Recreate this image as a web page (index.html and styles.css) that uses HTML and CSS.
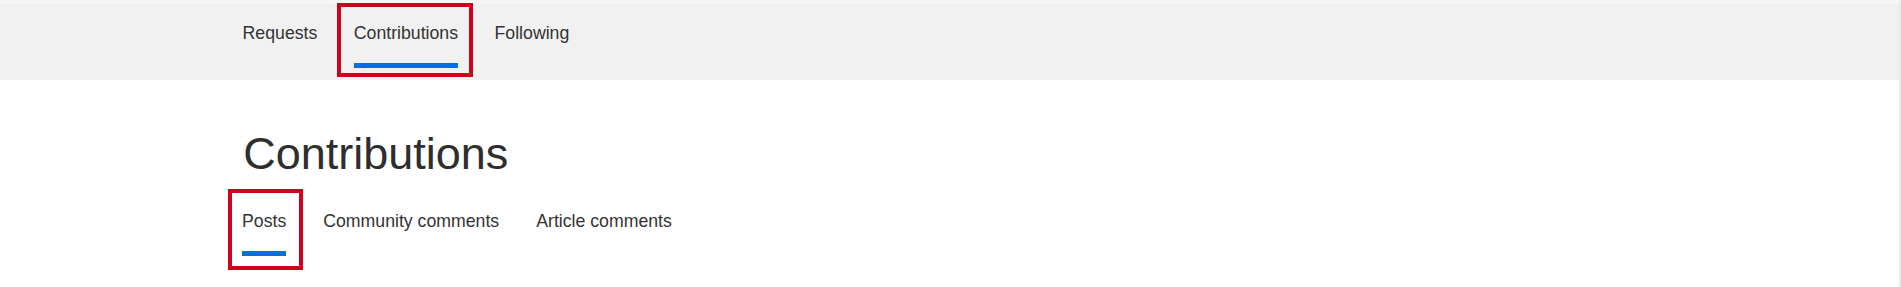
FILE: index.html
```html
<!DOCTYPE html>
<html lang="en">
<head>
<meta charset="utf-8">
<title>Contributions</title>
<link rel="stylesheet" href="styles.css">
</head>
<body>
<div class="page">
  <header class="topbar">
    <div class="strip"></div>
    <nav class="nav">
      <a class="nav-item" href="#"><span class="label">Requests</span><span class="bar"></span></a>
      <a class="nav-item active marked" href="#"><span class="label">Contributions</span><span class="bar"></span></a>
      <a class="nav-item" href="#"><span class="label">Following</span><span class="bar"></span></a>
    </nav>
  </header>
  <main class="content">
    <h1 class="title">Contributions</h1>
    <div class="tabs">
      <a class="tab active marked" href="#"><span class="label">Posts</span><span class="bar"></span></a>
      <a class="tab" href="#"><span class="label">Community comments</span><span class="bar"></span></a>
      <a class="tab" href="#"><span class="label">Article comments</span><span class="bar"></span></a>
    </div>
  </main>
</div>
</body>
</html>
```
FILE: styles.css
```css
html, body {
  margin: 0;
  padding: 0;
  background: #ffffff;
}
body {
  font-family: "Liberation Sans", Arial, sans-serif;
  color: #333333;
  height: 287px;
  overflow: hidden;
}
.page {
  width: 1899px;
  height: 287px;
  border-right: 2px solid #ebebeb;
}
.strip {
  height: 4px;
  background: #f6f6f6;
}
.nav {
  height: 76px;
  background: #f1f1f1;
  display: flex;
  gap: 36.5px;
  padding-left: 242.6px;
}
.nav-item, .tab {
  position: relative;
  display: flex;
  flex-direction: column;
  text-decoration: none;
  color: #333333;
  font-size: 17.7px;
}
.nav-item {
  padding-top: 19px;
}
.label {
  display: block;
  line-height: 20px;
  height: 20px;
  white-space: nowrap;
}
.bar {
  display: block;
  height: 5px;
  margin-top: 20px;
  background: transparent;
}
.active .bar {
  background: #006fe6;
}
.nav-item.marked::after {
  content: "";
  position: absolute;
  top: -1px;
  bottom: 3px;
  left: -17px;
  right: -15px;
  border: 4px solid #d0021b;
}
.content {
  padding-left: 242px;
}
.title {
  margin: 48.5px 0 0 1.2px;
  font-size: 45px;
  font-weight: 400;
  line-height: 50px;
  color: #2e2e2e;
}
.tabs {
  display: flex;
  gap: 37px;
  margin-top: 32.5px;
}
.tab.marked::after {
  content: "";
  position: absolute;
  top: -22px;
  bottom: -14px;
  left: -14px;
  right: -16.5px;
  border: 4px solid #d0021b;
}
```
